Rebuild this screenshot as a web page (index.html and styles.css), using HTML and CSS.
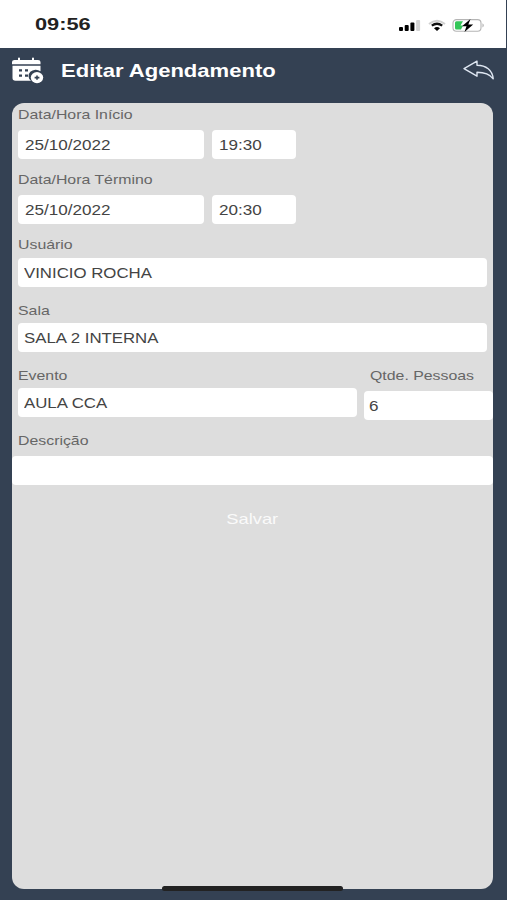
FILE: index.html
```html
<!DOCTYPE html>
<html lang="pt-BR">
<head>
    <meta charset="UTF-8">
    <meta name="viewport" content="width=device-width, initial-scale=1.0">
    <title>Editar Agendamento</title>
    <link rel="stylesheet" href="styles.css">
</head>
<body>
    <div class="status-bar">
        <span class="clock wide">09:56</span>
        <svg class="status-icons" width="88" height="18" viewBox="0 0 88 18">
            <!-- sinal -->
            <rect x="1" y="11" width="4" height="4" rx="1"/>
            <rect x="6.7" y="9" width="4" height="6" rx="1"/>
            <rect x="12.4" y="6.5" width="4" height="8.5" rx="1"/>
            <rect x="18.1" y="4" width="4" height="11" rx="1" fill="#d4d4d4"/>
            <!-- wifi -->
            <path d="M31 8 Q39 1.5 47 8" fill="none" stroke="#d0d0d0" stroke-width="2"/>
            <path d="M33.8 9.6 Q39 5.8 44.2 9.6" fill="none" stroke="#111" stroke-width="2.3"/>
            <path d="M36 12.2 Q39 10 42 12.2 L39 15Z"/>
            <!-- bateria -->
            <rect x="55" y="3.6" width="28" height="11.6" rx="3.5" fill="#fff" stroke="#b5b5b5" stroke-width="1.1"/>
            <path d="M58.5 5.3H65L62.5 9.5H65L63 13.5H58.5Q57 13.5 57 12V6.8Q57 5.3 58.5 5.3Z" fill="#34c759"/>
            <path d="M84.5 7.3Q87 9.4 84.5 11.5Z" fill="#aaa"/>
            <path d="M72.5 3L64 10.2H68.5L66.5 16L75.2 8.5H70.3Z"/>
        </svg>
    </div>

    <header class="header">
        <svg class="calendar-icon" width="32" height="27" viewBox="0 0 32 27">
            <path d="M0 7.2V5Q0 3 2.5 3H6V1.3Q6 .5 7 .5T8 1.3V3H20V1.3Q20 .5 21 .5T22 1.3V3H26Q28.5 3 28.5 5V7.2Z" fill="#fff"/>
            <path d="M0.5 8.8H28.5V14.2A6.8 6 0 0 0 19 23.8H3.5Q.5 23.8 .5 21Z" fill="#fff"/>
            <path d="M7 12.2h3v2.4H7zM13 12.2h3v2.4h-3zM7 17.4h3v2.4H7zM13 17.4h3v2.4h-3z" fill="#344153"/>
            <ellipse cx="25" cy="20.6" rx="6.2" ry="5.6" fill="#fff"/>
            <path d="M25 18.4v4.4M22.6 20.6h4.8" stroke="#344153" stroke-width="1.6"/>
        </svg>
        <h1 class="title wide">Editar Agendamento</h1>
        <svg class="back-icon" width="32" height="21" viewBox="0 0 32 21">
            <path d="M1 8.6L14 1.2V5.2C23 5.2 29.5 10 30.2 18.8C26.5 13.8 21 12.2 14 12.2V16.2Z" fill="none" stroke="#dfe7f2" stroke-width="1.4" stroke-linejoin="round"/>
        </svg>
    </header>

    <main class="card">
        <div class="row">
            <div class="group">
                <div class="label"><span class="wide">Data/Hora Início</span></div>
                <div class="pair">
                    <div class="field date"><span class="wide">25/10/2022</span></div>
                    <div class="field time"><span class="wide">19:30</span></div>
                </div>
            </div>
        </div>
        <div class="row">
            <div class="group">
                <div class="label"><span class="wide">Data/Hora Término</span></div>
                <div class="pair">
                    <div class="field date"><span class="wide">25/10/2022</span></div>
                    <div class="field time"><span class="wide">20:30</span></div>
                </div>
            </div>
        </div>
        <div class="row">
            <div class="group grow">
                <div class="label"><span class="wide">Usuário</span></div>
                <div class="field text"><span class="wide">VINICIO ROCHA</span></div>
            </div>
        </div>
        <div class="row">
            <div class="group grow">
                <div class="label"><span class="wide">Sala</span></div>
                <div class="field text"><span class="wide">SALA 2 INTERNA</span></div>
            </div>
        </div>
        <div class="row row-event">
            <div class="group grow">
                <div class="label"><span class="wide">Evento</span></div>
                <div class="field text"><span class="wide">AULA CCA</span></div>
            </div>
            <div class="group people">
                <div class="label"><span class="wide">Qtde. Pessoas</span></div>
                <div class="field"><span class="wide">6</span></div>
            </div>
        </div>
        <div class="row row-full">
            <div class="group grow">
                <div class="label"><span class="wide">Descrição</span></div>
                <div class="field"></div>
            </div>
        </div>
        <button class="save" type="button"><span class="wide">Salvar</span></button>
    </main>
    <div class="home-indicator"></div>
</body>
</html>
```
FILE: styles.css
```css
* {
    box-sizing: border-box;
}
body {
    margin: 0;
    height: 900px;
    overflow: hidden;
    position: relative;
    background: #344153;
    font-family: "Liberation Sans", Arial, sans-serif;
}
/* texto alargado na horizontal */
.wide {
    display: inline-block;
    transform: scaleX(1.22);
    transform-origin: left center;
    white-space: nowrap;
}
.status-bar {
    height: 48px;
    margin-right: 1px;
    padding: 0 20px 0 35px;
    display: flex;
    align-items: center;
    justify-content: space-between;
    background: #fff;
}
.clock {
    font-size: 16px;
    font-weight: bold;
    color: #222;
    padding-top: 2px;
    transform: scaleX(1.36);
}
.status-icons {
    margin-top: 2px;
}
.header {
    height: 55px;
    padding: 9px 12px 0;
    display: flex;
    align-items: flex-start;
}
.title {
    margin: 2px 0 0 17px;
    font-size: 19px;
    line-height: 24px;
    color: #fff;
    transform: scaleX(1.16);
}
.back-icon {
    margin: 3px 0 0 auto;
}
.card {
    height: 786px;
    margin: 0 14px 0 12px;
    background: #ddd;
    border-radius: 12px;
}
.row {
    height: 65.2px;
    padding: 0 6px;
    display: flex;
}
.grow {
    flex: 1;
}
.label {
    height: 24.7px;
    line-height: 24px;
    font-size: 13px;
    color: #666;
}
.pair {
    display: flex;
    gap: 8px;
    margin-top: 2.5px;
}
.field {
    height: 29px;
    padding-left: 7px;
    line-height: 30px;
    font-size: 14px;
    color: #444;
    background: #fff;
    border-radius: 4px;
}
.text {
    padding-left: 6px;
}
.text .wide {
    transform: scaleX(1.2);
}
.date {
    width: 186px;
}
.time {
    width: 84px;
}
.row-event {
    padding-right: 0;
    gap: 7px;
}
.people {
    width: 129px;
}
.people .label {
    padding-left: 6px;
}
.people .field {
    margin-top: 2.5px;
    padding-left: 5px;
}
.row-full {
    padding: 0;
}
.row-full .label {
    padding-left: 6px;
}
.row-full .field {
    margin-top: 2.5px;
}
.save {
    display: block;
    width: 100%;
    height: 36px;
    margin-top: 6px;
    padding: 0;
    border: none;
    background: none;
    font-family: inherit;
    font-size: 15px;
    color: #fafafa;
}
.save .wide {
    transform-origin: center;
}
.home-indicator {
    position: absolute;
    left: 162px;
    top: 886px;
    width: 181px;
    height: 5px;
    border-radius: 3px;
    background: #222;
}
```
